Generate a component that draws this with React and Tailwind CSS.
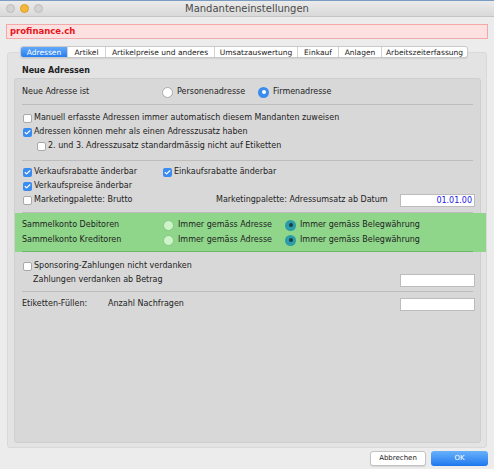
import { Check } from 'lucide-react';

const FONT = { fontFamily: '"DejaVu Sans", Verdana, sans-serif' };

function Box({ checked }) {
  return checked ? (
    <span className="w-[9px] h-[9px] rounded-[2px] bg-[#3b8cf0] flex items-center justify-center shrink-0">
      <Check size={7} strokeWidth={4} className="text-white" />
    </span>
  ) : (
    <span className="w-[9px] h-[9px] rounded-[2px] bg-white border border-[#a9a9a9] shrink-0" />
  );
}

function CheckRow({ checked, label, indent }) {
  return (
    <div className={`flex items-center h-[14px] gap-[2px] ${indent ? 'pl-[22px]' : 'pl-[8px]'}`}>
      <Box checked={checked} />
      <span>{label}</span>
    </div>
  );
}

function Radio({ on, green }) {
  if (green) {
    return on ? (
      <span className="w-[11px] h-[11px] rounded-full bg-[#2b9ca8] flex items-center justify-center shrink-0">
        <span className="w-[4px] h-[4px] rounded-full bg-[#1c3f44]" />
      </span>
    ) : (
      <span className="w-[11px] h-[11px] rounded-full bg-[#cdf3c8] border border-[#86c981] shrink-0" />
    );
  }
  return on ? (
    <span className="w-[11px] h-[11px] rounded-full bg-[#3b8cf0] flex items-center justify-center shrink-0">
      <span className="w-[4px] h-[4px] rounded-full bg-white" />
    </span>
  ) : (
    <span className="w-[11px] h-[11px] rounded-full bg-white border border-[#a9a9a9] shrink-0" />
  );
}

function Sep({ className = '' }) {
  return <div className={`h-px bg-[#bdbdbd] mx-[7px] ${className}`} />;
}

function Field({ value }) {
  return (
    <div className="w-[75px] h-[13px] bg-white border border-[#bcbcbc] text-right pr-[2px] text-[#2020e8] leading-[11px]">
      {value}
    </div>
  );
}

const TABS = ['Adressen', 'Artikel', 'Artikelpreise und anderes', 'Umsatzauswertung', 'Einkauf', 'Anlagen', 'Arbeitszeiterfassung'];
const TAB_W = [46, 38, 109, 83, 41, 43, 86];

export default function App() {
  return (
    <div className="w-[494px] h-[469px] bg-[#ececec] flex flex-col text-[8px] text-[#222]" style={FONT}>
      {/* title bar */}
      <div className="h-[17px] border-t border-[#7a9cc0] bg-gradient-to-b from-[#ebebeb] to-[#d9d9d9] border-b border-b-[#c4c4c4] flex items-center relative">
        <div className="flex gap-[5px] pl-[6px]">
          <span className="w-[9px] h-[9px] rounded-full bg-[#d3d3d3] border border-[#bdbdbd]" />
          <span className="w-[9px] h-[9px] rounded-full bg-[#f5b73a] border border-[#dc9f2a]" />
          <span className="w-[9px] h-[9px] rounded-full bg-[#d3d3d3] border border-[#bdbdbd]" />
        </div>
        <div className="absolute inset-0 flex items-center justify-center text-[10px] text-[#4a4a4a]">Mandanteneinstellungen</div>
      </div>

      {/* red company field */}
      <div className="mt-[7px] mx-[6px] h-[15px] bg-[#fde0e0] border border-[#f3a9a9] flex items-center pl-[3px] text-[#e8141b] font-bold text-[8.5px]">
        profinance.ch
      </div>

      {/* tabs */}
      <div className="mt-[7px] pl-[20px] flex relative z-10 h-[12px]">
        <div className="flex bg-white border border-[#c9c9c9] rounded-[3px] shadow-[0_1px_1px_rgba(0,0,0,0.08)] overflow-hidden">
          {TABS.map((t, i) => (
            <div
              key={t}
              style={{ width: TAB_W[i] }}
              className={`h-[11px] flex items-center justify-center text-[7.5px] ${i === 0 ? 'bg-gradient-to-b from-[#62aaf9] to-[#1d78ef] text-white' : 'border-l border-[#d2d2d2] text-[#222]'}`}
            >
              {t}
            </div>
          ))}
        </div>
      </div>

      {/* outer panel */}
      <div className="-mt-[6px] mx-[7px] h-[396px] bg-[#e3e3e3] border border-[#d9d9d9] rounded-[3px] flex flex-col pt-[12px]">
        <div className="pl-[14px] font-bold h-[12px] flex items-center">Neue Adressen</div>

        <div className="mt-[1px] ml-[6px] w-[467px] h-[365px] bg-[#d8d8d8] border border-[#cfcfcf] rounded-[3px] flex flex-col">
          <div className="mt-[6px] h-[14px] flex items-center pl-[7px]">
            <span className="w-[140px]">Neue Adresse ist</span>
            <span className="flex items-center gap-[4px] w-[96px]"><Radio />Personenadresse</span>
            <span className="flex items-center gap-[4px]"><Radio on />Firmenadresse</span>
          </div>
          <Sep className="mt-[5px]" />

          <div className="mt-[6px]">
            <CheckRow label="Manuell erfasste Adressen immer automatisch diesem Mandanten zuweisen" />
            <CheckRow checked label="Adressen können mehr als einen Adresszusatz haben" />
            <CheckRow indent label="2. und 3. Adresszusatz standardmässig nicht auf Etiketten" />
          </div>
          <Sep className="mt-[7px]" />

          <div className="mt-[4px]">
            <div className="flex">
              <div className="w-[148px]"><CheckRow checked label="Verkaufsrabatte änderbar" /></div>
              <div className="flex items-center h-[14px] gap-[2px]"><Box checked /><span>Einkaufsrabatte änderbar</span></div>
            </div>
            <CheckRow checked label="Verkaufspreise änderbar" />
            <div className="flex items-center">
              <div className="w-[201px]"><CheckRow label="Marketingpalette: Brutto" /></div>
              <span className="flex-1">Marketingpalette: Adressumsatz ab Datum</span>
              <div className="mr-[5px]"><Field value="01.01.00" /></div>
            </div>
          </div>
          <Sep className="mt-[5px]" />

          {/* green section */}
          <div className="-mr-[6px] bg-[#8fd68a] pt-[5px] flex flex-col">
            {['Sammelkonto Debitoren', 'Sammelkonto Kreditoren'].map((l, i) => (
              <div key={l} className={`h-[14px] flex items-center pl-[7px] ${i ? 'mt-[1px]' : ''}`}>
                <span className="w-[141px]">{l}</span>
                <span className="flex items-center gap-[4px] w-[122px]"><Radio green />Immer gemäss Adresse</span>
                <span className="flex items-center gap-[4px]"><Radio green on />Immer gemäss Belegwährung</span>
              </div>
            ))}
            <div className="mt-[4px] h-px bg-[#6cb767] ml-[7px] mr-[13px]" />
          </div>

          <div className="mt-[7px]">
            <CheckRow label="Sponsoring-Zahlungen nicht verdanken" />
            <div className="flex items-center h-[14px] pl-[18px]">
              <span className="flex-1">Zahlungen verdanken ab Betrag</span>
              <div className="mr-[5px]"><Field /></div>
            </div>
          </div>
          <Sep className="mt-[4px]" />

          <div className="mt-[5px] h-[14px] flex items-center pl-[7px]">
            <span className="w-[86px]">Etiketten-Füllen:</span>
            <span className="flex-1">Anzahl Nachfragen</span>
            <div className="mr-[5px]"><Field /></div>
          </div>
        </div>
      </div>

      {/* buttons */}
      <div className="mt-[3px] flex justify-end gap-[5px] pr-[6px]">
        <button className="w-[56px] h-[15px] bg-white border border-[#c3c3c3] rounded-[3px] text-[7px] text-[#222] shadow-[0_1px_1px_rgba(0,0,0,0.1)]">Abbrechen</button>
        <button className="w-[57px] h-[15px] rounded-[3px] text-[7px] text-white bg-gradient-to-b from-[#67b1fa] to-[#1b77ee]">OK</button>
      </div>
    </div>
  );
}
